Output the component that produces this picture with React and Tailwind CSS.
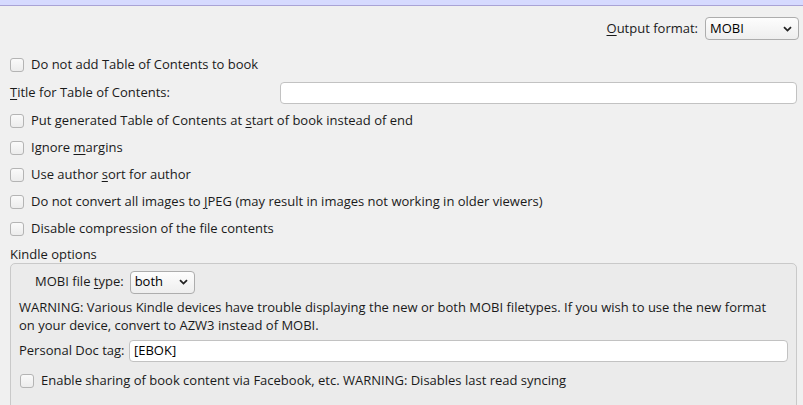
import React from 'react';

const font = { fontFamily: '"Open Sans", "Noto Sans", sans-serif' };

function Check({ children }) {
    return (
        <div className="flex items-center h-[27px]">
            <span className="w-[14px] h-[14px] rounded-[3px] border border-[#b4b4b4] bg-gradient-to-b from-[#fafafa] to-[#ececec] shrink-0" />
            <span className="ml-[7px] whitespace-nowrap">{children}</span>
        </div>
    );
}

function Select({ value, className }) {
    return (
        <div className={"flex items-center h-[23px] rounded-[4px] border border-[#adadad] bg-gradient-to-b from-[#fdfdfd] to-[#eeeeee] pl-[4px] pr-[6px] " + className}>
            <span className="flex-1 text-black">{value}</span>
            <svg width="9" height="6" viewBox="0 0 9 6" className="shrink-0">
                <path d="M1 1.2 L4.5 4.6 L8 1.2" fill="none" stroke="#222" strokeWidth="1.8" />
            </svg>
        </div>
    );
}

function U({ children }) {
    return <span className="underline underline-offset-2">{children}</span>;
}

export default function App() {
    return (
        <div className="w-[803px] h-[405px] overflow-hidden bg-[#f0f0f0] text-[13px] text-[#1a1a1a]" style={font}>
            <div className="h-[6px] bg-[#d6daff] border-b border-[#a9a3d6]" />
            <div className="flex items-center justify-end h-[27px] mt-[9px] pr-[4px]">
                <span className="mr-[7px]"><U>O</U>utput format:</span>
                <Select value="MOBI" className="w-[94px]" />
            </div>
            <div className="pl-[10px] pr-[6px] mt-[9px]">
                <div className="pb-[1px]">
                    <Check>Do not add Table of Contents to book</Check>
                </div>
                <div className="flex items-center h-[28px]">
                    <span className="w-[270px] shrink-0"><U>T</U>itle for Table of Contents:</span>
                    <div className="flex-1 h-[22px] rounded-[4px] border border-[#c2c2c2] bg-white" />
                </div>
                <Check>Put generated Table of Contents at <U>s</U>tart of book instead of end</Check>
                <Check>Ignore <U>m</U>argins</Check>
                <Check>Use author <U>s</U>ort for author</Check>
                <Check>Do not convert all images to <U>J</U>PEG (may result in images not working in older viewers)</Check>
                <Check>Disable compression of the file contents</Check>
                <div className="h-[21px] pt-[3px]">Kindle options</div>
                <div className="rounded-t-[5px] border border-[#c9c9c9] bg-[#ebebeb] h-[200px] pl-[8px] pr-[8px]">
                    <div className="flex items-center h-[30px] mt-[3px] pl-[16px]">
                        <span className="mr-[6px]">MOBI file <U>t</U>ype:</span>
                        <Select value="both" className="w-[65px]" />
                    </div>
                    <div className="leading-[18px] pr-[12px] pt-[1px]">
                        WARNING: Various Kindle devices have trouble displaying the new or both MOBI filetypes. If you wish to use the new format on your device, convert to AZW3 instead of MOBI.
                    </div>
                    <div className="flex items-center h-[28px] mt-[3px]">
                        <span className="w-[110px] shrink-0">Personal Doc tag:</span>
                        <div className="flex-1 h-[22px] rounded-[4px] border border-[#c2c2c2] bg-white flex items-center px-[4px] text-black">[EBOK]</div>
                    </div>
                    <div className="pl-[1px] pt-[2px]">
                        <Check>Enable sharing of book content via Facebook, etc. WARNING: Disables last read syncing</Check>
                    </div>
                </div>
            </div>
        </div>
    );
}
